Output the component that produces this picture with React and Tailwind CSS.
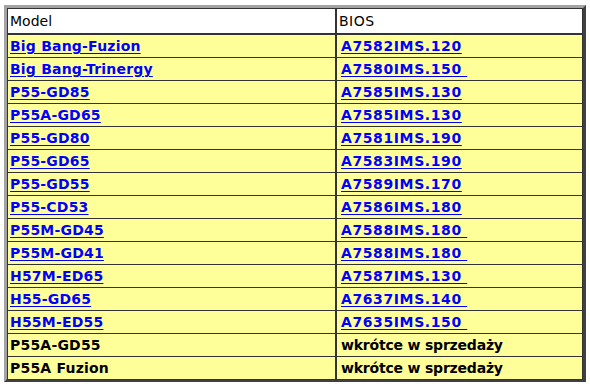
import React from "react";

const rows = [
  { model: "Big Bang-Fuzion", bios: "A7582IMS.120" },
  { model: "Big Bang-Trinergy", bios: "A7580IMS.150\u00a0" },
  { model: "P55-GD85", bios: "A7585IMS.130" },
  { model: "P55A-GD65", bios: "A7585IMS.130" },
  { model: "P55-GD80", bios: "A7581IMS.190" },
  { model: "P55-GD65", bios: "A7583IMS.190" },
  { model: "P55-GD55", bios: "A7589IMS.170" },
  { model: "P55-CD53", bios: "A7586IMS.180" },
  { model: "P55M-GD45", bios: "A7588IMS.180\u00a0" },
  { model: "P55M-GD41", bios: "A7588IMS.180\u00a0" },
  { model: "H57M-ED65", bios: "A7587IMS.130\u00a0" },
  { model: "H55-GD65", bios: "A7637IMS.140\u00a0" },
  { model: "H55M-ED55", bios: "A7635IMS.150\u00a0" },
  { model: "P55A-GD55", soon: true },
  { model: "P55A Fuzion", soon: true },
];

export default function App() {
  return (
    <div className="min-h-screen bg-white pt-[5px] pl-[4px] font-['DejaVu_Sans',sans-serif]">
      <div className="w-[582px] border-[3px] border-t-[#a3a3a3] border-l-[#a3a3a3] border-r-[#404040] border-b-[#404040]">
        {/* nagłówek */}
        <div className="grid grid-cols-[329px_247px] h-[26px] bg-white">
          <div className="border border-[#333] flex items-center pl-[2px] text-[14px] text-black">
            Model
          </div>
          <div className="border border-[#333] flex items-center pl-[2px] text-[14px] text-black tracking-[0.5px]">
            BIOS
          </div>
        </div>

        {/* wiersze */}
        {rows.map((r, i) => (
          <div key={i} className="grid grid-cols-[329px_247px] h-[23px] bg-[#ffff99]">
            <div className="border border-[#333] flex items-center pl-[2px] pt-[1px] text-[14px] font-bold tracking-[0.2px]">
              {r.soon ? (
                <span className="text-black">{r.model}</span>
              ) : (
                <a href="#" className="text-[#0000ff] underline underline-offset-[2px] whitespace-pre">
                  {r.model}
                </a>
              )}
            </div>
            <div className="border border-[#333] flex items-center pl-[4px] pt-[1px] text-[14px] font-bold">
              {r.soon ? (
                <span className="text-black tracking-[-0.2px]">wkrótce w sprzedaży</span>
              ) : (
                <a href="#" className="text-[#0000ff] underline underline-offset-[2px] tracking-[0.6px] whitespace-pre">
                  {r.bios}
                </a>
              )}
            </div>
          </div>
        ))}
      </div>
    </div>
  );
}
